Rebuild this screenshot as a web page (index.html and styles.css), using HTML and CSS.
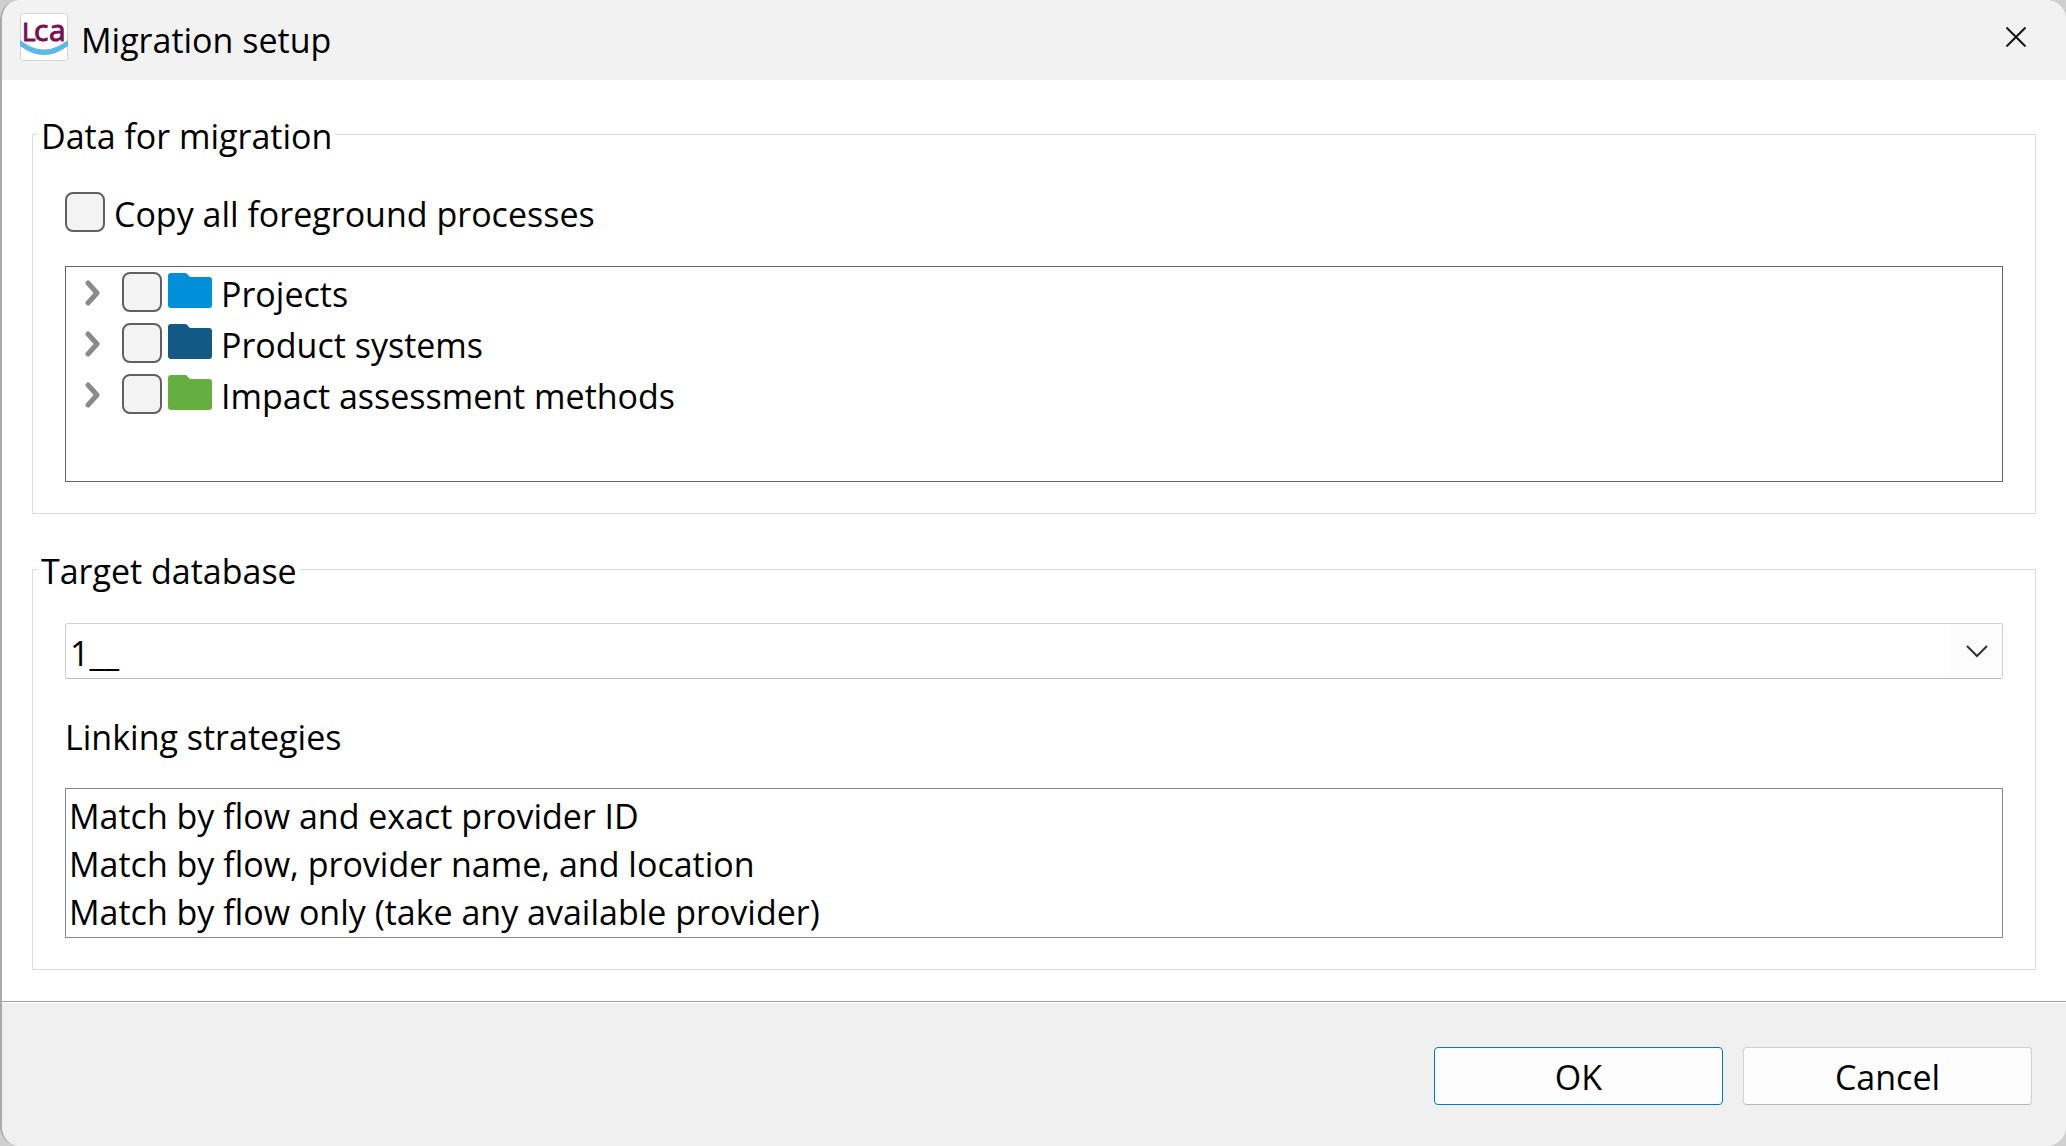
FILE: index.html
```html
<!DOCTYPE html>
<html lang="en">
<head>
<meta charset="utf-8">
<title>Migration setup</title>
<meta name="viewport" content="width=device-width, initial-scale=1">
<link rel="stylesheet" href="styles.css">
</head>
<body>
<svg class="sprite" aria-hidden="true">
  <symbol id="folder" viewBox="0 0 46 36">
    <path d="M4 0H18Q20 0 21 2L23 4H42Q45 4 45 7V32Q45 35 42 35H4Q1 35 1 32V3Q1 0 4 0Z" fill="currentColor"/>
  </symbol>
  <symbol id="chevron" viewBox="0 0 16 26">
    <path d="M3 3L12 13L3 23" fill="none" stroke="currentColor" stroke-width="5" stroke-linecap="round" stroke-linejoin="round"/>
  </symbol>
</svg>
<form class="dialog">
  <header class="titlebar">
    <svg class="logo" viewBox="0 0 48 48" aria-hidden="true">
      <rect x="0.5" y="0.5" width="47" height="47" rx="3" fill="#fff" stroke="#d4d4d4"/>
      <path d="M0 27Q24 46 48 27V33Q24 51 0 33Z" fill="#5bb8e8"/>
      <g class="logo-text">
        <text class="logo-cap" x="2" y="28">L</text>
        <text class="logo-low" x="14" y="28">c</text>
        <text class="logo-low" x="29" y="28">a</text>
      </g>
    </svg>
    <h1 class="title">Migration setup</h1>
    <button class="close" type="button" aria-label="Close">
      <svg class="close-icon" viewBox="0 0 20 20" aria-hidden="true"><path d="M0.500 0.500L19.500 19.500M19.500 0.500L0.500 19.500" stroke="#111" stroke-width="2"/></svg>
    </button>
  </header>

  <main class="content">
    <fieldset class="group">
      <legend class="legend">Data for migration</legend>
      <label class="check-row"><input class="check" type="checkbox">Copy all foreground processes</label>
      <ul class="tree">
        <li class="tree-row">
          <button class="expander" type="button" aria-label="Expand Projects"><svg class="chevron"><use href="#chevron"/></svg></button>
          <label class="tree-label"><input class="check" type="checkbox"><svg class="folder folder-projects"><use href="#folder"/></svg>Projects</label>
        </li>
        <li class="tree-row">
          <button class="expander" type="button" aria-label="Expand Product systems"><svg class="chevron"><use href="#chevron"/></svg></button>
          <label class="tree-label"><input class="check" type="checkbox"><svg class="folder folder-systems"><use href="#folder"/></svg>Product systems</label>
        </li>
        <li class="tree-row">
          <button class="expander" type="button" aria-label="Expand Impact assessment methods"><svg class="chevron"><use href="#chevron"/></svg></button>
          <label class="tree-label"><input class="check" type="checkbox"><svg class="folder folder-methods"><use href="#folder"/></svg>Impact assessment methods</label>
        </li>
      </ul>
    </fieldset>

    <fieldset class="group">
      <legend class="legend">Target database</legend>
      <div class="combo">
        <select class="combo-select" aria-label="Target database"><option>1__</option></select>
        <svg class="combo-arrow" viewBox="0 0 52 54" aria-hidden="true"><path d="M17 22L27 32L37 22" fill="none" stroke="#333" stroke-width="2"/></svg>
      </div>
      <label class="list-label" for="strategies">Linking strategies</label>
      <select class="list" id="strategies" size="3">
        <option>Match by flow and exact provider ID</option>
        <option>Match by flow, provider name, and location</option>
        <option>Match by flow only (take any available provider)</option>
      </select>
    </fieldset>
  </main>

  <footer class="footer">
    <button class="button button-default" type="submit">OK</button>
    <button class="button" type="button">Cancel</button>
  </footer>
</form>
</body>
</html>
```
FILE: styles.css
```css
* {
  box-sizing: border-box;
}

body {
  margin: 0;
  background: #cfcfcf;
  color: #000;
  font: 34px/48px "Segoe UI", "Open Sans", "Noto Sans", sans-serif;
}

button,
select {
  font: inherit;
  color: inherit;
}

.sprite {
  display: none;
}

.dialog {
  display: flex;
  flex-direction: column;
  min-height: 100vh;
  border-left: 2px solid #a9a9a9;
  border-radius: 20px;
  background: #fff;
  overflow: hidden;
}

.titlebar {
  display: flex;
  align-items: center;
  height: 80px;
  padding: 0 40px 6px 18px;
  background: #f2f2f2;
}

.logo {
  width: 48px;
  height: 48px;
  overflow: visible;
}

.logo-text {
  fill: #7a0f55;
  stroke: #7a0f55;
  font-family: "Open Sans", sans-serif;
  line-height: 1;
}

.logo-cap {
  font-size: 26px;
}

.logo-low {
  font-size: 30px;
}

.title {
  flex: 1;
  margin: 5px 0 0 13px;
  font-size: 34px;
  font-weight: 400;
}

.close {
  display: flex;
  padding: 0;
  border: 0;
  background: none;
}

.close-icon {
  width: 20px;
  height: 20px;
}

.content {
  display: flex;
  flex-direction: column;
  gap: 31px;
  padding: 30px 30px 31px;
}

.group {
  display: flex;
  flex-direction: column;
  min-width: 0;
  margin: 0;
  padding: 30px 32px 31px;
  border: 1px solid #dcdcdc;
}

.legend {
  margin-left: -27px;
  padding: 4px 3px 0;
  line-height: 44px;
}

.check-row {
  display: flex;
  align-items: center;
  align-self: flex-start;
  gap: 9px;
  margin: 2px 0 28px;
}

.check {
  appearance: none;
  flex: none;
  width: 40px;
  height: 40px;
  margin: 0 0 4px;
  border: 2px solid #606060;
  border-radius: 8px;
  background: #f3f3f3;
}

.tree {
  min-height: 216px;
  margin: 0;
  padding: 1px 19px 0;
  border: 1px solid #646464;
  list-style: none;
}

.tree-row {
  display: flex;
  align-items: center;
  gap: 21px;
  height: 51px;
}

.expander {
  display: flex;
  padding: 0 0 2px;
  border: 0;
  background: none;
}

.chevron {
  width: 16px;
  height: 26px;
  color: #8a8a8a;
}

.tree-label {
  display: flex;
  align-items: center;
}

.folder {
  width: 46px;
  height: 36px;
  margin: 0 8px 6px 5px;
}

.folder-projects {
  color: #008fd9;
}

.folder-systems {
  color: #125a85;
}

.folder-methods {
  color: #67ae40;
}

.combo {
  display: grid;
}

.combo-select,
.combo-arrow {
  grid-area: 1 / 1;
}

.combo-select {
  appearance: none;
  height: 56px;
  padding: 3px 4px 0;
  border: 1px solid #d0d0d0;
  border-bottom-color: #b8b8b8;
  border-radius: 3px;
  background: #fff;
}

.combo-arrow {
  justify-self: end;
  align-self: center;
  width: 52px;
  height: 54px;
  margin-right: 1px;
  background: #fcfcfc;
  pointer-events: none;
}

.list-label {
  margin: 34px 0 27px;
}

.list {
  appearance: none;
  height: 150px;
  padding: 4px 0 0;
  border: 1px solid #828790;
  border-radius: 0;
  background: #fff;
  overflow: hidden;
}

.list option {
  min-height: 48px;
  padding: 0 3px;
  line-height: 48px;
}

.footer {
  display: flex;
  flex: 1;
  gap: 20px;
  justify-content: flex-end;
  align-items: flex-start;
  padding: 45px 34px 41px;
  border-top: 1px solid #a0a0a0;
  background: #f0f0f0;
  box-shadow: inset 0 1px #fff;
}

.button {
  width: 289px;
  height: 58px;
  padding: 2px 0 0;
  border: 1px solid #d0d0d0;
  border-bottom-color: #b8b8b8;
  border-radius: 4px;
  background: #fdfdfd;
}

.button-default {
  border-color: #0078d4;
}
```
